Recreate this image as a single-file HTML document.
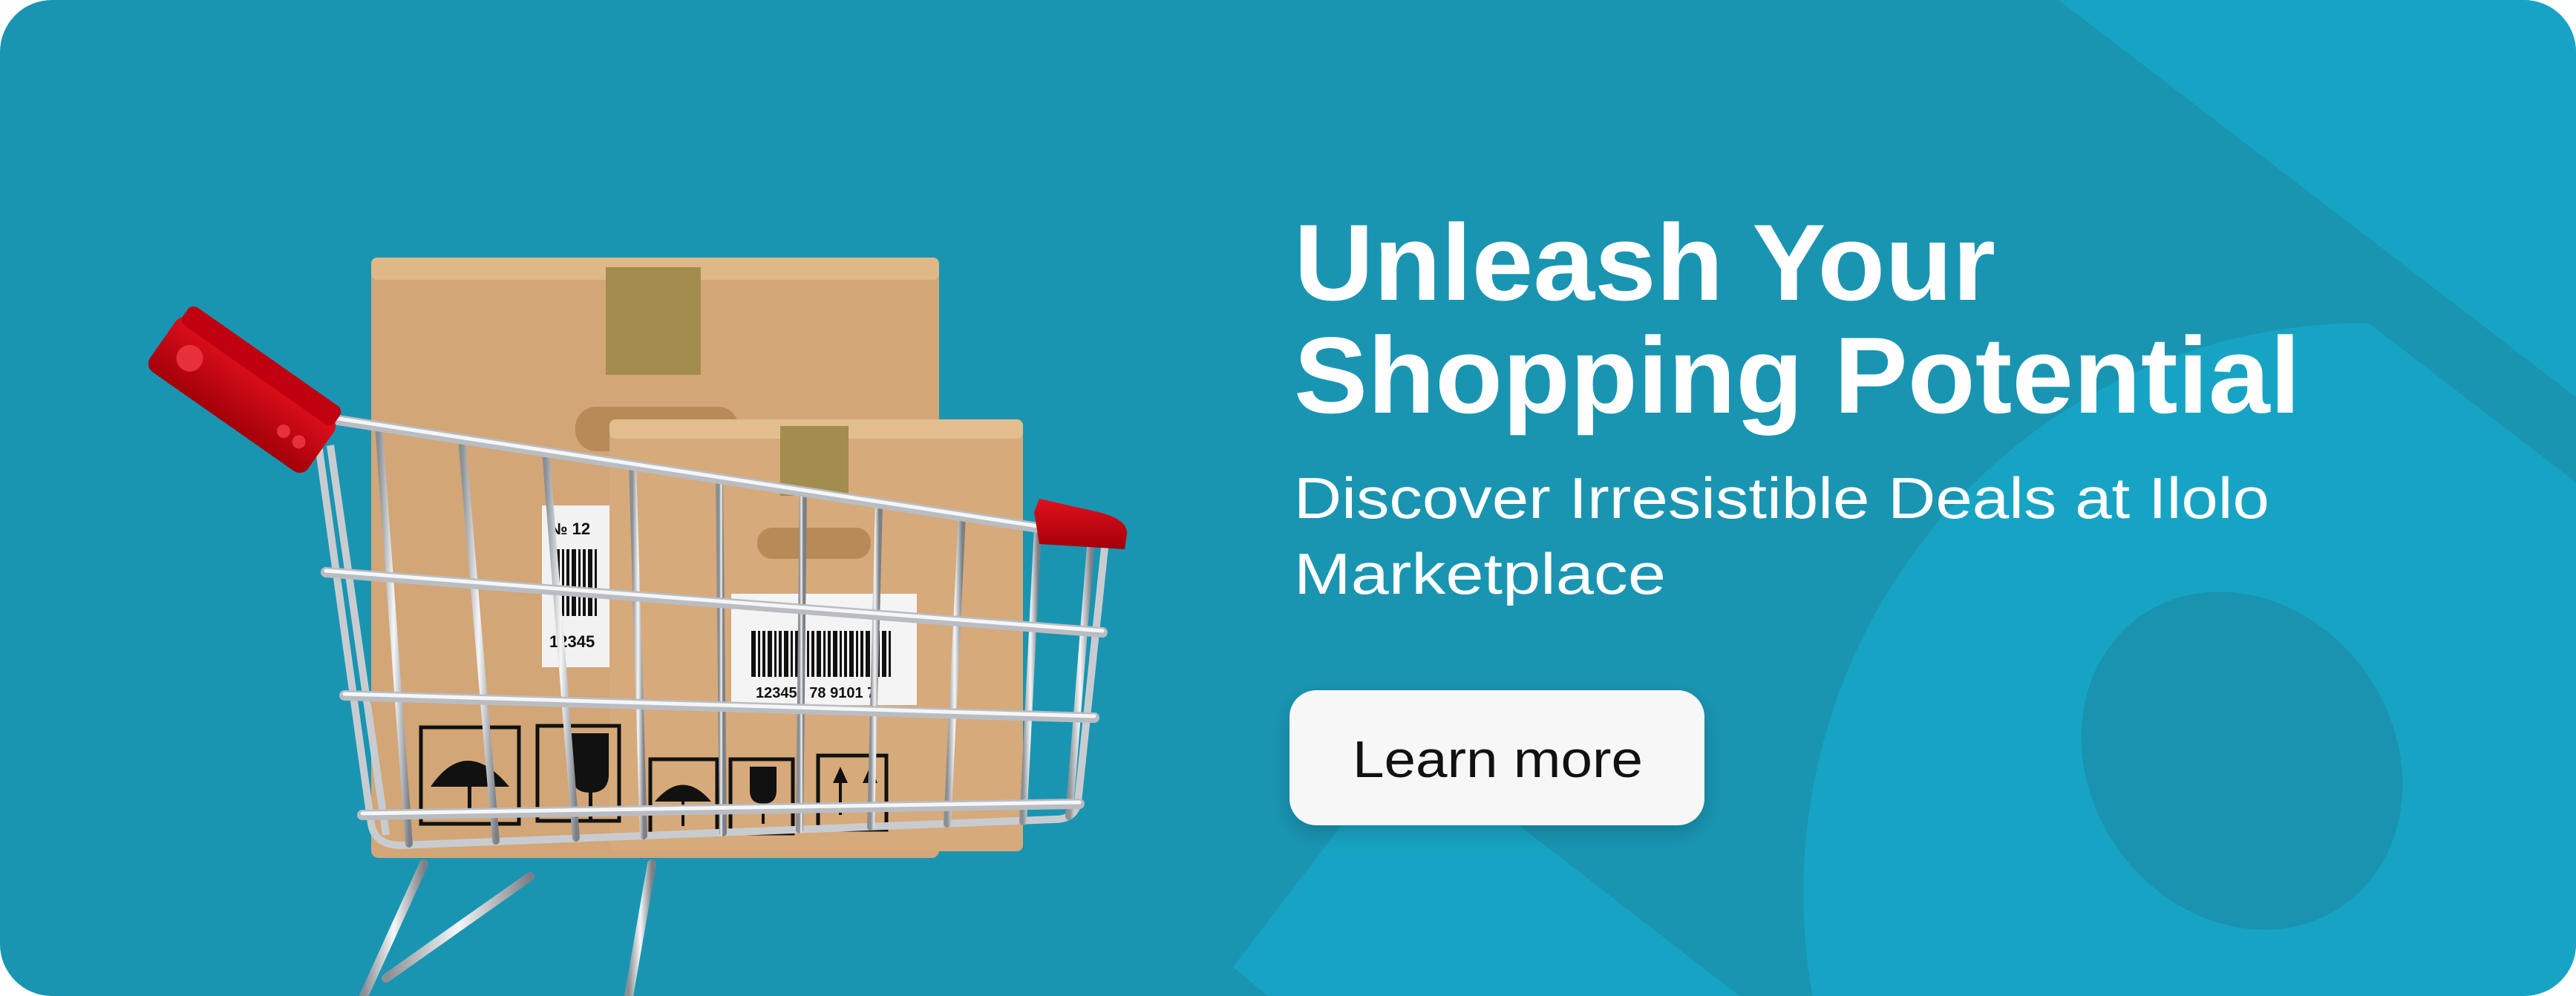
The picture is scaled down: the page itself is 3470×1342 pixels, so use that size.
<!DOCTYPE html>
<html><head><meta charset="utf-8"><style>
html,body{margin:0;padding:0;background:#fff;width:3470px;height:1342px;overflow:hidden}
svg{display:block}
text{font-family:"Liberation Sans",sans-serif}
</style></head><body>
<svg width="3470" height="1342" viewBox="0 0 3470 1342" xmlns="http://www.w3.org/2000/svg">
<defs>
<clipPath id="c"><rect x="0" y="0" width="3470" height="1342" rx="70"/></clipPath>
<linearGradient id="wire" x1="0" y1="0" x2="1" y2="0"><stop offset="0" stop-color="#8a8f94"/><stop offset=".5" stop-color="#f4f6f8"/><stop offset="1" stop-color="#7c8086"/></linearGradient>
<linearGradient id="red" x1="0" y1="0" x2="0" y2="1"><stop offset="0" stop-color="#e0101c"/><stop offset="1" stop-color="#a3000a"/></linearGradient>
<pattern id="bc" width="22" height="10" patternUnits="userSpaceOnUse"><rect width="6" height="10" fill="#111"/><rect x="9" width="3" height="10" fill="#111"/><rect x="15" width="4" height="10" fill="#111"/></pattern>
<filter id="sh" x="-20%" y="-20%" width="140%" height="160%"><feDropShadow dx="0" dy="10" stdDeviation="14" flood-color="#000" flood-opacity=".18"/></filter>
</defs>
<g clip-path="url(#c)">
<rect width="3470" height="1342" fill="#1995b2"/>
<polygon points="2773,0 3470,0 3470,535" fill="#17a4c4"/>
<ellipse cx="3190" cy="1210" rx="760" ry="775" transform="rotate(-12 3190 1210)" fill="#17a4c4"/>
<polygon points="2623,0 2773,0 3470,535 3470,650" fill="#1995b2"/>
<ellipse cx="3020" cy="1025" rx="205" ry="238" transform="rotate(-35 3020 1025)" fill="#1993b0"/>
<polygon points="1708,1342 1661,1303 1807,1112 1860,990 1960,990 2046,1112 2343,1342" fill="#17a4c4"/>

<!-- boxes -->
<rect x="500" y="360" width="765" height="796" rx="10" fill="#d2a676"/>
<rect x="500" y="347" width="765" height="30" rx="8" fill="#dfb888"/>
<rect x="816" y="360" width="128" height="145" fill="#a38d4e"/>
<rect x="775" y="548" width="220" height="60" rx="28" fill="#b88a58"/>
<rect x="730" y="681" width="96" height="218" fill="#f2f2f2"/>
<rect x="745" y="740" width="60" height="90" fill="url(#bc)"/>
<text x="740" y="720" font-size="22" font-weight="bold" fill="#111">№ 12</text>
<text x="740" y="872" font-size="22" font-weight="bold" fill="#111">12345</text>
<rect x="821" y="575" width="557" height="572" rx="8" fill="#d6aa7a"/>
<rect x="821" y="565" width="557" height="26" rx="8" fill="#e2bd8e"/>
<rect x="1051" y="574" width="92" height="94" fill="#a38d4e"/>
<rect x="1020" y="711" width="153" height="42" rx="20" fill="#b88a58"/>
<rect x="985" y="800" width="250" height="150" fill="#f4f4f4"/>
<rect x="1010" y="850" width="190" height="62" fill="url(#bc)"/>
<text x="1018" y="940" font-size="20" font-weight="bold" fill="#111">123456   78  9101   7</text>
<g fill="none" stroke="#111" stroke-width="5">
<rect x="567" y="980" width="132" height="130"/>
<rect x="724" y="978" width="110" height="128"/>
<rect x="876" y="1023" width="90" height="100"/>
<rect x="984" y="1023" width="84" height="100"/>
<rect x="1102" y="1018" width="92" height="100"/>
</g>
<g fill="#111">
<path d="M580 1060 Q628 990 686 1060 Z"/><rect x="630" y="1055" width="5" height="45"/>
<path d="M770 988 h50 v55 q0 25 -25 25 q-25 0 -25 -25 Z"/><rect x="793" y="1065" width="5" height="40"/>
<path d="M882 1080 Q920 1035 958 1080 Z"/><rect x="918" y="1075" width="4" height="38"/>
<path d="M1010 1033 h36 v32 q0 18 -18 18 q-18 0 -18 -18 Z"/><rect x="1026" y="1080" width="4" height="30"/>
<path d="M1122 1055 l10 -22 l10 22 Z"/><rect x="1130" y="1053" width="4" height="45"/>
<path d="M1162 1055 l10 -22 l10 22 Z"/><rect x="1170" y="1053" width="4" height="45"/>
</g>

<g stroke="url(#wire)" stroke-width="12" fill="none" stroke-linecap="round">
<path d="M571 1164 L490 1342"/>
<path d="M878 1164 L847 1342"/>
<path d="M714 1181 L520 1318"/>
</g>
<g fill="none" stroke="#c8ccd0" stroke-width="10">
<path d="M429 599 L500 1110 Q505 1139 540 1139 L1420 1104 Q1449 1104 1452 1080 L1490 719"/>
<path d="M445 600 L520 1125"/>
</g>
<g stroke="url(#wire)" stroke-width="10" stroke-linecap="round">
<line x1="510" y1="574" x2="551" y2="1137"/>
<line x1="622" y1="592" x2="668" y2="1133"/>
<line x1="735" y1="609" x2="776" y2="1129"/>
<line x1="852" y1="627" x2="867" y2="1126"/>
<line x1="969" y1="645" x2="974" y2="1122"/>
<line x1="1082" y1="662" x2="1077" y2="1118"/>
<line x1="1184" y1="678" x2="1173" y2="1114"/>
<line x1="1296" y1="695" x2="1276" y2="1110"/>
<line x1="1398" y1="711" x2="1378" y2="1107"/>
<line x1="1470" y1="725" x2="1440" y2="1100"/>
</g>
<g stroke="#b9bdc2" stroke-width="14" stroke-linecap="round">
<line x1="449" y1="565" x2="1398" y2="711"/>
<line x1="439" y1="771" x2="1485" y2="852"/>
<line x1="464" y1="937" x2="1474" y2="967"/>
<line x1="488" y1="1098" x2="1454" y2="1083"/>
</g>
<g stroke="#f4f6f7" stroke-width="5" stroke-linecap="round">
<line x1="449" y1="563" x2="1398" y2="709"/>
<line x1="439" y1="769" x2="1485" y2="850"/>
<line x1="464" y1="935" x2="1474" y2="965"/>
<line x1="488" y1="1096" x2="1454" y2="1081"/>
</g>
<g transform="rotate(35 326 532)">
<rect x="196" y="488" width="260" height="88" rx="14" fill="url(#red)"/>
<rect x="200" y="470" width="250" height="30" rx="10" fill="#c00010"/>
<circle cx="240" cy="532" r="18" fill="#e8303a"/>
<circle cx="400" cy="540" r="9" fill="#e8303a"/>
<circle cx="425" cy="540" r="9" fill="#e8303a"/>
</g>
<path d="M1393 690 L1400 672 L1480 690 Q1520 700 1518 720 L1515 740 L1400 733 Z" fill="url(#red)"/>

<text x="1743" y="404" font-size="146" font-weight="bold" fill="#fff" textLength="945" lengthAdjust="spacingAndGlyphs">Unleash Your</text>
<text x="1743" y="556" font-size="146" font-weight="bold" fill="#fff" textLength="1356" lengthAdjust="spacingAndGlyphs">Shopping Potential</text>
<text x="1743" y="698" font-size="78" fill="#fff" textLength="1314" lengthAdjust="spacingAndGlyphs">Discover Irresistible Deals at Ilolo</text>
<text x="1743" y="800" font-size="78" fill="#fff" textLength="501" lengthAdjust="spacingAndGlyphs">Marketplace</text>

<rect x="1737" y="930" width="559" height="182" rx="36" fill="#f7f7f7" filter="url(#sh)"/>
<text x="1822" y="1047" font-size="70" fill="#111" textLength="391" lengthAdjust="spacingAndGlyphs">Learn more</text>
</g>
</svg>
</body></html>
